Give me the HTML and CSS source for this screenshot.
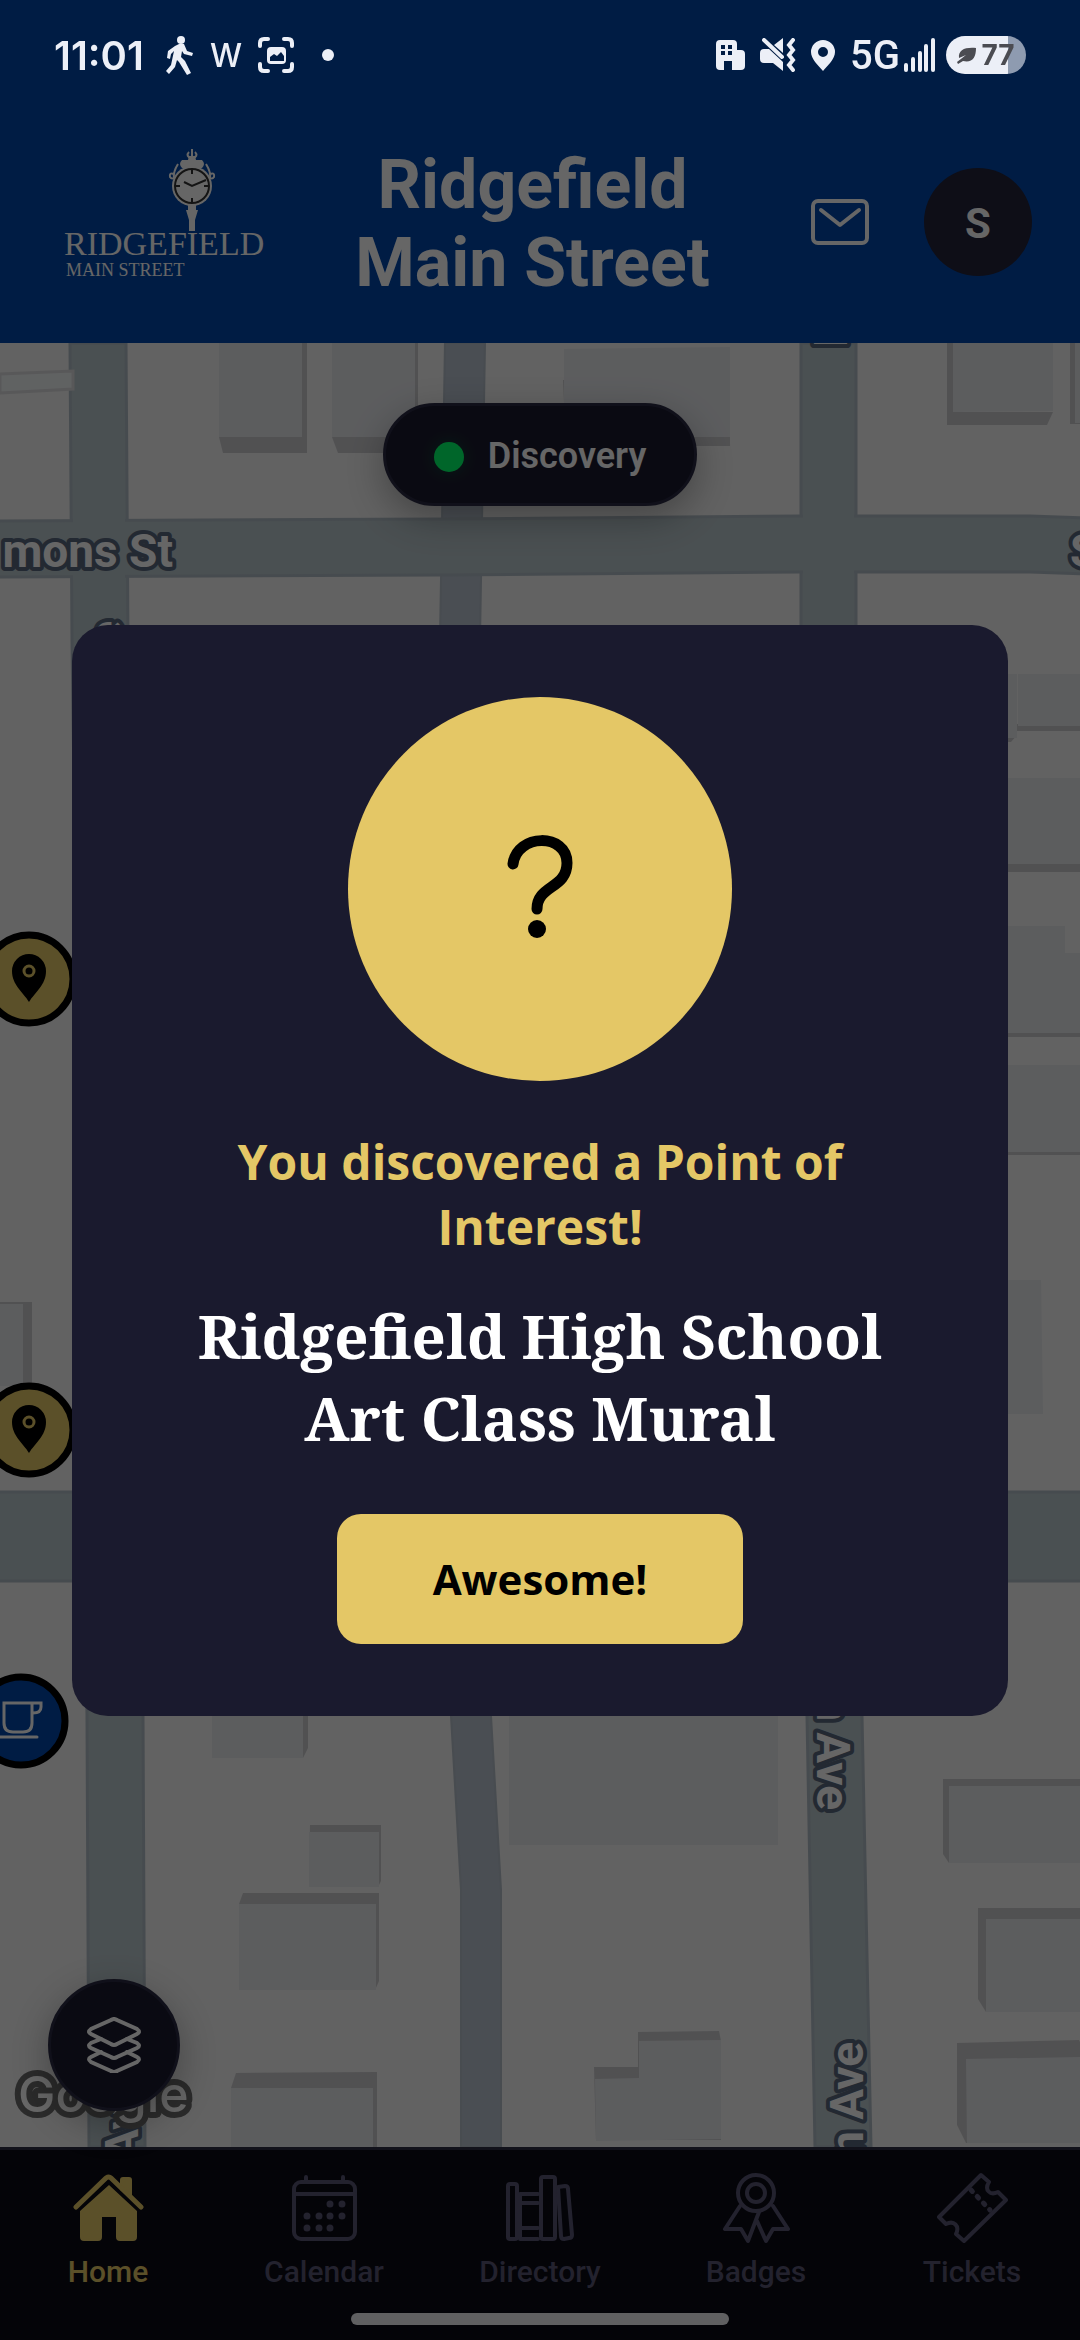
FILE: index.html
```
<!DOCTYPE html>
<html lang="en">
<head>
  <meta charset="UTF-8">
  <meta name="viewport" content="width=device-width, initial-scale=1">
  <title>Ridgefield Main Street</title>
  <link rel="stylesheet" href="styles.css">
</head>
<body>
  <!-- Top bar -->
  <header class="header">
    <div class="status-bar">
      <div class="status-group">
        <span class="clock">11:01</span>
        <svg class="status-icon" viewBox="0 0 28 40" width="28" height="40">
          <circle cx="15" cy="5" r="4"/>
          <path d="M9 11l4-2h5l3 7 6 2-1 3-8-2-2-3-1 6 4 4 6 12-4 2-8-13-2-2-2 7-6 7-3-3 5-6 3-14-3 3-1 5-3-1 1-7z"/>
        </svg>
        <span class="w-icon">W</span>
        <svg class="status-line" viewBox="0 0 36 36" width="36" height="36">
          <path d="M2 9V6q0-4 4-4h4M26 2h4q4 0 4 4v3M34 27v3q0 4-4 4h-4M10 34H6q-4 0-4-4v-3"/>
          <rect class="solid" x="9" y="10" width="19" height="17" rx="4"/>
          <path class="hole" d="M12 24v-4l4-3 3 2 4-4 3 4v5z"/>
        </svg>
        <span class="dot"></span>
      </div>
      <div class="status-group right">
        <svg class="status-icon" viewBox="0 0 30 32" width="30" height="32">
          <path fill-rule="evenodd" d="M4 1h13q4 0 4 4v6h4q4 0 4 4v12q0 4-4 4h-9v-9h-8v9H4q-4 0-4-4V5q0-4 4-4zM5 6v4h4V6zm7 0v4h4V6zm-7 6v4h4v-4zm7 0v4h4v-4z"/>
        </svg>
        <svg class="status-icon" viewBox="0 0 36 34" width="36" height="34">
          <path d="M14 7l9-7v15zM4 11h5L23 24v9l-10-8H4q-4 0-4-4v-6q0-4 4-4z"/>
          <path class="stroke" d="M4 2l18 17M33 2l-4 5 4 5-4 5 4 5-4 5 4 5"/>
        </svg>
        <svg class="status-icon" viewBox="0 0 26 32" width="26" height="32">
          <path fill-rule="evenodd" d="M13 1a12 12 0 0 1 12 12c0 7-7 13-12 19C8 26 1 20 1 13A12 12 0 0 1 13 1zm0 7a5 5 0 1 0 0 10 5 5 0 0 0 0-10z"/>
        </svg>
        <span class="network">5G
          <svg class="status-line bars" viewBox="0 0 32 36" width="32" height="36">
            <path d="M2 28v5M9 22v11M16 16v17M22 9v24M29 3v30"/>
          </svg>
        </span>
        <span class="battery">
          <svg viewBox="0 0 20 18" width="20" height="18">
            <path d="M2 12C1 4 8 1 19 2c0 10-4 15-13 13L1 18l-1-2 9-7z"/>
          </svg>77
        </span>
      </div>
    </div>

    <div class="title-row">
      <a class="logo" href="#" aria-label="Ridgefield Main Street">
        <svg viewBox="0 0 200 150" width="200" height="150">
          <g transform="translate(29 0)">
            <path class="scroll" d="M99 12V2M99 12q-7-3-3-7M99 12q7-3 3-7M85 17q-5 8-4 14M113 17q5 8 4 14M81 27q-5-2-4 3 2 3 5 0M117 27q5-2 4 3-2 3-5 0"/>
            <path class="metal" d="M96 9h6l1 4h6q4 4 0 8H89q-4-4 0-8h6zM95 58h8v5h2l-3 10v11h-6V73l-3-10h2z"/>
            <circle class="metal" cx="99" cy="39" r="20"/>
            <circle class="dial" cx="99" cy="39" r="17"/>
            <path class="hands" d="M91 35l8 4 14-6M99 23v4M99 51v4M83 39h4M111 39h4"/>
          </g>
          <text class="logo-name" x="0" y="108">RIDGEFIELD</text>
          <text class="logo-sub" x="2" y="129">MAIN STREET</text>
        </svg>
      </a>
      <h1>Ridgefield Main Street</h1>
      <div class="actions">
        <button class="mail" aria-label="Messages">
          <svg viewBox="0 0 60 48" width="60" height="48">
            <rect x="3" y="3" width="54" height="42" rx="5"/>
            <path d="M11 12l19 15 19-15"/>
          </svg>
        </button>
        <button class="avatar">S</button>
      </div>
    </div>
  </header>

  <!-- Map -->
  <main class="map">
    <svg class="map-canvas" viewBox="0 343 1080 1804" preserveAspectRatio="xMidYMid slice">
      <defs>
        <symbol id="place" viewBox="-48 -48 96 96">
          <circle class="pin-gold" r="44"/>
          <path class="pin-shape" d="M0 23C-6 13-17 6-17-8a17 17 0 0 1 34 0C17 6 6 13 0 23z"/>
          <circle class="pin-eye" cy="-8" r="5"/>
        </symbol>
      </defs>

      <!-- Local streets -->
      <path class="street" d="M445 343L440 640L451 1716L461 1890V2147H501V1890L491 1716L480 640L485 343z"/>
      <!-- Main streets -->
      <g class="road">
        <path d="M70 343L72 640L87 1716L89 2147H145L143 1716L128 640L126 343z"/>
        <path d="M801 343V640L807 1716L815 2147H871L862 1716L856 640V343z"/>
        <path d="M-4 521L440 519L801 516H1030L1084 518V574L1030 572H801L440 575L-4 577z"/>
        <path d="M-4 1492H1084V1581H-4z"/>
      </g>
      <g class="junction">
        <path d="M73 516h52v64H73zM803 512h51v64h-51zM90 1710h51v8H90z"/>
      </g>

      <!-- Building walls -->
      <g class="wall">
        <path d="M219 343h88v110h-84l-4-16zM332 343h86v110h-80l-6-16zM563 380h5v57h162v9H566zM947 343h6v69h100l-6 13H947zM1070 343h12v81h-12z"/>
        <path d="M0 1302h32v84H0zM1008 678h9v57l-6 7h-3zM1017 724h65v7h-65zM1008 864h74v8h-74zM1008 1032h74v5h-74zM1008 1152h74v3h-74z"/>
        <path d="M212 1716h96v32l-5 10h-91zM310 1825h71v56l-3 6h-69zM243 1893h136v88l-4 9H239v-86zM236 2073l141-1v78H231v-62z"/>
        <path d="M943 1779h140v84H949l-6-9zM978 1908h104v104h-96l-8-13zM957 2043l122-3 3 6v97H966l-9-18zM638 2032l81-1 2 10v99H596l-2-73h44z"/>
      </g>
      <!-- Building roofs -->
      <g class="roof">
        <path d="M219 343h83v94h-83zM332 343h83v94h-83zM564 349l166-2v90H564zM953 343h100v68l-100 1zM1075 343h7v80h-7z"/>
        <path class="light" d="M0 374l73-3v18l-73 4z"/>
        <path d="M0 1304h23v82H0zM1008 674h9v64h-9zM1018 674h64v52h-64zM1008 778h74v86h-74zM1008 926h57v27h17v80h-74zM1008 1065h74v87h-74zM1008 1280h33l2 134h-35z"/>
        <path d="M212 1716h91v42h-91zM309 1832h70v55h-70zM239 1904h137v86H239zM231 2088h142v60H231zM509 1716h269v129H509z"/>
        <path d="M949 1786h133v77H949zM986 1919h96v93h-96zM966 2059l116-2v86H967zM639 2041l82-1v99l-125 2-1-62 44-1z"/>
      </g>

      <!-- Street names -->
      <g class="street-name">
        <text x="173" y="567" text-anchor="end">mons St</text>
        <text x="1070" y="567">St</text>
        <text transform="translate(847 347) rotate(-90)">E</text>
        <text transform="translate(122 621) rotate(-90)" text-anchor="end">n Ave</text>
        <text transform="translate(817 1810) rotate(90)" text-anchor="end">n Ave</text>
        <text transform="translate(863 2042) rotate(-90)" text-anchor="end">n Ave</text>
        <text transform="translate(138 2082) rotate(-90)" text-anchor="end">n Ave</text>
      </g>
      <text class="google" x="18" y="2112">Google</text>

      <!-- Markers -->
      <use href="#place" x="-19" y="931" width="96" height="96"/>
      <use href="#place" x="-19" y="1382" width="96" height="96"/>
      <g transform="translate(21 1721)">
        <circle class="pin-blue" r="44"/>
        <path class="cup" d="M-17-18h28v20q0 9-9 9h-10q-9 0-9-9zM12-18h8v4q0 6-8 6M-22 16h38"/>
      </g>
    </svg>

    <button class="discovery"><span class="led"></span>Discovery</button>
    <button class="layers" aria-label="Map layers">
      <svg viewBox="0 0 54 56" width="54" height="56">
        <path d="M24 3q3-2 6 0l20 9q4 3 0 5l-20 10q-3 2-6 0L4 17q-4-2 0-5z"/>
        <path d="M14 22L4 26q-4 3 0 5l20 9q3 2 6 0l20-9q4-2 0-5l-10-4"/>
        <path d="M14 35L4 40q-4 2 0 5l20 9q3 2 6 0l20-9q4-3 0-5l-10-5"/>
      </svg>
    </button>
  </main>

  <!-- Bottom navigation -->
  <nav class="nav">
    <div class="tabs">
      <a class="tab active" href="#">
        <svg viewBox="0 0 72 72" width="72" height="72">
          <path class="solid" d="M48 18V8q0-3 3-3h6q3 0 3 3v19zM37 13l28 26v26q0 4-4 4H48q-4 0-4-4V45H30v20q0 4-4 4H12q-4 0-4-4V39z"/>
          <path class="eaves" d="M4 35L34 6q3-2 5 0l30 29"/>
        </svg>
        Home
      </a>
      <a class="tab" href="#">
        <svg viewBox="0 0 72 72" width="72" height="72">
          <rect x="6" y="10" width="61" height="57" rx="7"/>
          <path d="M6 22h61M18 10V5M55 10V5"/>
          <path class="dots" d="M42 32h0M54 32h0M19 44h0M31 44h0M42 44h0M54 44h0M19 56h0M31 56h0M42 56h0"/>
        </svg>
        Calendar
      </a>
      <a class="tab" href="#">
        <svg viewBox="0 0 72 72" width="72" height="72">
          <rect x="4" y="12" width="9" height="55" rx="2"/>
          <path d="M16 22h18M16 31h18M16 56h18M16 67h18M16 22v45"/>
          <rect x="37" y="5" width="14" height="62" rx="2"/>
          <path d="M54 15l7-1q3 0 3 3l4 46q0 3-3 3l-5 1q-3 0-3-3z"/>
        </svg>
        Directory
      </a>
      <a class="tab" href="#">
        <svg viewBox="0 0 72 72" width="72" height="72">
          <circle cx="36" cy="21" r="18"/>
          <circle cx="36" cy="21" r="9"/>
          <path d="M20 34L5 57h16l7 12 11-29M53 34l15 23H53l-7 12-9-20"/>
        </svg>
        Badges
      </a>
      <a class="tab" href="#">
        <svg viewBox="0 0 72 72" width="72" height="72">
          <path d="M45 3l8 7c-5 8 1 14 9 10l8 8-42 41-8-7c4-8-2-14-10-10l-7-7z"/>
          <path class="dashed" d="M35 18l19 20"/>
        </svg>
        Tickets
      </a>
    </div>
    <div class="home-bar"></div>
  </nav>

  <!-- Discovery dialog -->
  <div class="overlay">
    <section class="modal" role="dialog" aria-labelledby="found" aria-describedby="place-name">
      <div class="badge">
        <svg viewBox="0 0 66 108" width="66" height="108">
          <path d="M6 29C10-2 60-2 60 28c0 26-30 22-30 46"/>
          <circle cx="30" cy="94" r="9"/>
        </svg>
      </div>
      <p class="found" id="found">You discovered a Point of Interest!</p>
      <h2 id="place-name">Ridgefield High School Art Class Mural</h2>
      <button class="awesome">Awesome!</button>
    </section>
  </div>
</body>
</html>
```
FILE: styles.css
```
* {
  box-sizing: border-box;
}

body {
  margin: 0;
  min-height: 100vh;
  display: flex;
  flex-direction: column;
  font-family: Roboto, sans-serif;
  background-color: #0a0a14;
  color: #fff;
}

button {
  font-family: inherit;
  color: inherit;
  border: none;
  padding: 0;
  background: none;
  cursor: pointer;
}

svg {
  flex: none;
}

/* Header */
.header {
  background-color: #0047ab;
}

/* Stays bright above the overlay */
.status-bar {
  position: relative;
  z-index: 3;
  height: 110px;
  padding: 0 54px;
  display: flex;
  align-items: center;
  justify-content: space-between;
  color: #eceff7;
  font-family: Inter, sans-serif;
  font-size: 40px;
  font-weight: 600;
}

.status-group {
  display: flex;
  align-items: center;
  gap: 16px;
}

.status-group.right {
  gap: 14px;
}

.clock {
  margin-right: 6px;
}

.w-icon {
  font-size: 32px;
  font-weight: 500;
}

.status-icon {
  fill: #eceff7;
}

.status-icon .stroke,
.status-line {
  fill: none;
  stroke: #eceff7;
  stroke-width: 4;
  stroke-linecap: round;
}

.status-line .solid {
  fill: #eceff7;
  stroke: none;
}

.status-line .hole {
  fill: #001c44;
  stroke: none;
}

.dot {
  width: 12px;
  height: 12px;
  margin-left: 12px;
  border-radius: 50%;
  background-color: #eceff7;
}

.network {
  display: flex;
  align-items: center;
  gap: 4px;
  font-family: Roboto, sans-serif;
  font-weight: 500;
}

.battery {
  display: flex;
  align-items: center;
  justify-content: center;
  gap: 4px;
  width: 80px;
  height: 38px;
  margin-left: -4px;
  border-radius: 20px;
  background: linear-gradient(90deg, #eceff7 77%, #8e9bb0 77%);
  color: #4b4c52;
  font-size: 28px;
  font-weight: 700;
  fill: #4b4c52;
}

.title-row {
  display: flex;
  align-items: center;
  min-height: 233px;
  padding: 0 48px 10px;
}

.logo {
  width: 231px;
  display: flex;
  justify-content: center;
}

.metal,
.logo text {
  fill: #fff;
}

.scroll {
  fill: none;
  stroke: #fff;
  stroke-width: 2;
}

.dial,
.hands {
  fill: none;
  stroke: #333;
  stroke-width: 2;
}

.logo text {
  font-family: "Liberation Serif", serif;
}

.logo .logo-name {
  font-size: 34px;
}

.logo .logo-sub {
  font-size: 18px;
}

h1 {
  flex: 1;
  margin: 0;
  padding: 4px 60px 0;
  font-size: 68px;
  line-height: 78px;
  font-weight: 700;
  text-align: center;
}

.actions {
  display: flex;
  align-items: center;
  gap: 30px;
}

.mail,
.avatar {
  width: 108px;
  height: 108px;
  border-radius: 50%;
}

.mail {
  display: flex;
  align-items: center;
  justify-content: center;
  fill: none;
  stroke: #fff;
  stroke-width: 4;
  stroke-linecap: round;
  stroke-linejoin: round;
}

.avatar {
  padding-top: 4px;
  background-color: #23233a;
  font-size: 42px;
  font-weight: 700;
}

/* Map */
.map {
  position: relative;
  flex: 1;
  display: flex;
  flex-direction: column;
  align-items: flex-start;
  justify-content: space-between;
  padding: 60px 48px 36px;
  background-color: #f4f4f4;
}

.map-canvas {
  position: absolute;
  inset: 0;
  width: 100%;
  height: 100%;
}

.road {
  fill: #b9c7cc;
  stroke: #b0bcc5;
  stroke-width: 3;
}

.junction {
  fill: #b9c7cc;
}

.street {
  fill: #b8c2cf;
  stroke: #b3bdc8;
  stroke-width: 2;
}

.wall {
  fill: #cbcbce;
}

.roof {
  fill: #e6e8ec;
}

.roof .light {
  fill: #f1f4f6;
  stroke: #dcdcde;
  stroke-width: 3;
}

.street-name {
  font-size: 46px;
  font-weight: 700;
  fill: #fff;
  stroke: #57667d;
  stroke-width: 8;
  stroke-linejoin: round;
  paint-order: stroke;
}

.google {
  font-family: Inter, sans-serif;
  font-size: 50px;
  font-weight: 500;
  fill: #fff;
  stroke: #6b6b6b;
  stroke-width: 12;
  stroke-linejoin: round;
  paint-order: stroke;
}

.pin-gold {
  fill: #e4c766;
  stroke: #000;
  stroke-width: 7;
}

.pin-blue {
  fill: #0047ab;
  stroke: #000;
  stroke-width: 7;
}

.pin-eye {
  fill: none;
  stroke: #e4c766;
  stroke-width: 3;
}

.cup {
  fill: none;
  stroke: #fff;
  stroke-width: 3;
  stroke-linecap: round;
}

.discovery,
.layers {
  position: relative;
  display: flex;
  align-items: center;
  justify-content: center;
  border: 3px solid #2a2a42;
  background-color: #1a1a2e;
  box-shadow: 0 12px 36px rgba(0, 0, 0, 0.3);
}

.discovery {
  align-self: center;
  gap: 24px;
  padding: 29px 48px 25px;
  border-radius: 52px;
  font-size: 36px;
  line-height: 43px;
  font-weight: 600;
}

.led {
  width: 30px;
  height: 30px;
  border-radius: 50%;
  background-color: #00ff6a;
  box-shadow: 0 0 18px rgba(0, 255, 106, 0.2);
}

.layers {
  width: 132px;
  height: 132px;
  border-radius: 50%;
  fill: none;
  stroke: #fff;
  stroke-width: 4;
  stroke-linecap: round;
}

/* Bottom navigation */
.nav {
  display: flex;
  flex-direction: column;
  align-items: center;
  gap: 23px;
  padding: 22px 0 15px;
  border-top: 3px solid #2d2d44;
  background-color: #0a0a14;
}

.tabs {
  width: 100%;
  display: grid;
  grid-template-columns: repeat(5, 1fr);
}

.tab {
  display: flex;
  flex-direction: column;
  align-items: center;
  gap: 10px;
  color: #575573;
  font-size: 30px;
  line-height: 36px;
  font-weight: 500;
  text-decoration: none;
  fill: none;
  stroke: #575573;
  stroke-width: 4;
  stroke-linecap: round;
  stroke-linejoin: round;
}

.tab.active {
  color: #e4c766;
  stroke: #e4c766;
}

.tab .solid {
  fill: #e4c766;
  stroke: none;
}

.tab .eaves {
  stroke-width: 5;
}

.tab .dots {
  stroke-width: 7;
}

.tab .dashed {
  stroke-dasharray: 2 7;
  stroke-width: 5;
}

.home-bar {
  width: 35%;
  height: 12px;
  border-radius: 6px;
  background-color: #f0f0f2;
}

/* Dialog */
.overlay {
  position: fixed;
  inset: 0;
  z-index: 2;
  display: flex;
  align-items: center;
  justify-content: center;
  padding: 72px;
  background-color: rgba(0, 0, 0, 0.6);
}

.modal {
  width: 100%;
  display: flex;
  flex-direction: column;
  align-items: center;
  padding: 72px;
  border-radius: 36px;
  background-color: #1a1a2e;
  text-align: center;
}

.badge {
  display: flex;
  align-items: center;
  justify-content: center;
  width: 384px;
  height: 384px;
  border-radius: 50%;
  background-color: #e4c766;
}

.badge path {
  fill: none;
  stroke: #000;
  stroke-width: 11;
  stroke-linecap: round;
}

.found {
  margin: 48px 0 36px;
  color: #e4c766;
  font-family: "Open Sans", "Noto Sans", sans-serif;
  font-size: 48px;
  line-height: 65px;
  font-weight: 700;
}

h2 {
  margin: 0 0 55px;
  font-family: "Noto Serif", "DejaVu Serif", serif;
  font-size: 60px;
  line-height: 82px;
  font-weight: 700;
}

.awesome {
  padding: 36px 96px;
  border-radius: 24px;
  background-color: #e4c766;
  color: #000;
  font-family: "Open Sans", "Noto Sans", sans-serif;
  font-size: 42px;
  line-height: 58px;
  font-weight: 700;
}
```
